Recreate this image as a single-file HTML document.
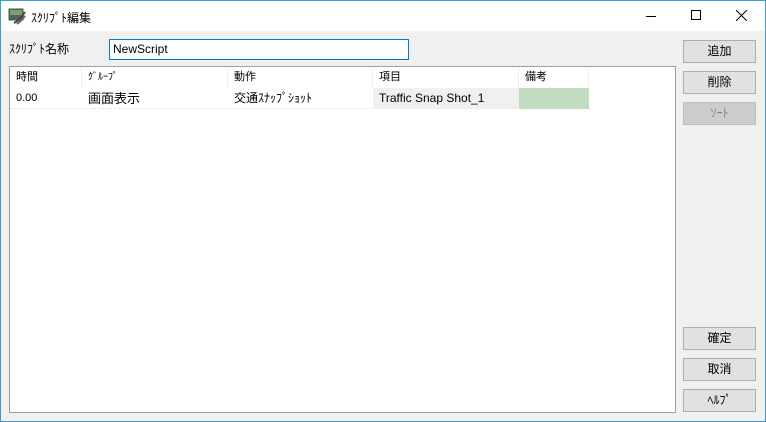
<!DOCTYPE html>
<html><head><meta charset="utf-8"><style>
*{margin:0;padding:0;box-sizing:border-box}
body{width:766px;height:422px;overflow:hidden;background:#f0f0f0;font-family:"Liberation Sans","Noto Sans CJK JP",sans-serif;font-size:12px;color:#000;position:relative}
.win{position:absolute;left:0;top:0;width:766px;height:422px;border:1px solid #3c9ad8;border-top:none}
.title{position:absolute;left:0;top:0;width:766px;height:31px;background:#fff;border-top:1px solid #3c9ad8}
.abs{position:absolute}
.btn{position:absolute;left:683px;width:73px;height:23px;background:#e1e1e1;border:1px solid #adadad;text-align:center;line-height:21px;font-size:12px}
.hdr,.row{position:absolute;left:10px;height:21px;line-height:21px;font-size:11px}
.c{position:absolute;top:0;height:21px;padding-left:6px}
</style></head><body>
<div class="title">
<svg class="abs" style="left:8px;top:7px" width="18" height="17" viewBox="0 0 18 17"><rect x="1" y="1" width="14" height="11" fill="#4a6b5a" stroke="#555"/><rect x="2" y="2" width="12" height="5" fill="#7aa070"/><path d="M6 15 Q12 12 17 4" stroke="#444" stroke-width="2" fill="none"/><path d="M9 16 Q14 12 17 8" stroke="#666" stroke-width="2" fill="none"/></svg>
<div class="abs" style="left:31px;top:8px;font-size:12px">ｽｸﾘﾌﾟﾄ編集</div>
<div class="abs" style="left:646px;top:15px;width:10px;height:1px;background:#000"></div>
<div class="abs" style="left:691px;top:9px;width:10px;height:10px;border:1px solid #000"></div>
<svg class="abs" style="left:736px;top:9px" width="11" height="11"><path d="M0 0L11 11M11 0L0 11" stroke="#000" stroke-width="1"/></svg>
</div>
<div class="win"></div>
<div class="abs" style="left:9px;top:40px">ｽｸﾘﾌﾟﾄ名称</div>
<div class="abs" style="left:109px;top:39px;width:300px;height:21px;background:#fff;border:1px solid #0078d7;padding-left:3px;line-height:18px">NewScript</div>
<div class="abs" style="left:9px;top:66px;width:667px;height:347px;background:#fff;border:1px solid #a0a0a0">
</div>
<div class="hdr" style="top:67px;width:580px">
<div class="c" style="left:0;width:72px;border-right:1px solid #eee">時間</div>
<div class="c" style="left:72px;width:146px;border-right:1px solid #eee;font-size:10px">ｸﾞﾙｰﾌﾟ</div>
<div class="c" style="left:218px;width:145px;border-right:1px solid #eee">動作</div>
<div class="c" style="left:363px;width:146px;border-right:1px solid #eee">項目</div>
<div class="c" style="left:509px;width:70px;border-right:1px solid #eee">備考</div>
</div>
<div class="row" style="top:88px;width:580px;border-bottom:1px dotted #ddd">
<div class="c" style="left:0;width:72px;font-size:11px">0.00</div>
<div class="c" style="left:72px;width:146px;font-size:13px">画面表示</div>
<div class="c" style="left:218px;width:145px;font-size:12px">交通ｽﾅｯﾌﾟｼｮｯﾄ</div>
<div class="c" style="left:363px;width:146px;background:#f0f0f0;font-size:12px">Traffic Snap Shot_1</div>
<div class="c" style="left:509px;width:70px;background:#c2dcc2"></div>
</div>
<div class="btn" style="top:40px">追加</div>
<div class="btn" style="top:71px">削除</div>
<div class="btn" style="top:102px;background:#ccc;border-color:#bfbfbf;color:#838383">ｿｰﾄ</div>
<div class="btn" style="top:327px">確定</div>
<div class="btn" style="top:358px">取消</div>
<div class="btn" style="top:389px">ﾍﾙﾌﾟ</div>
</body></html>
